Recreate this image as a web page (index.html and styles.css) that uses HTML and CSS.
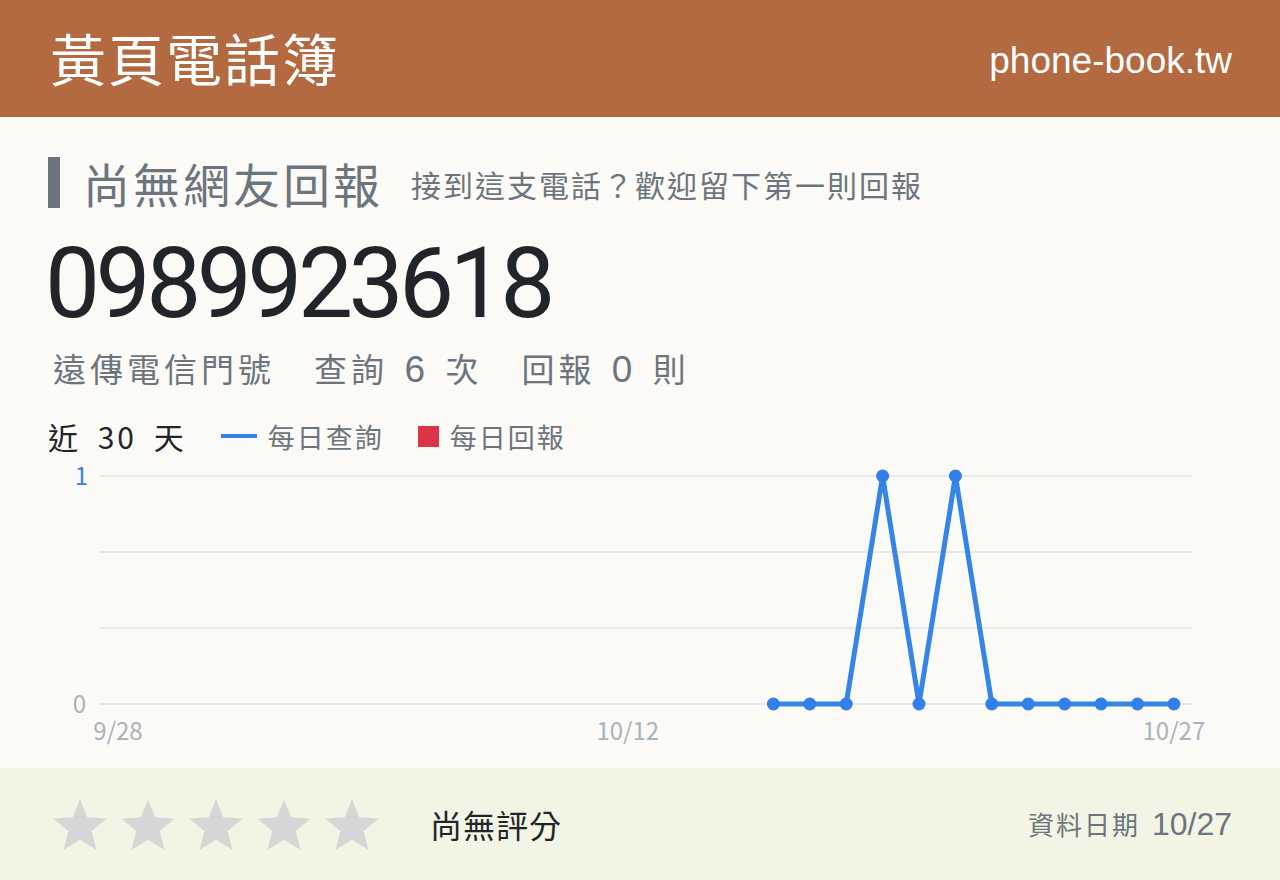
FILE: index.html
```html
<!DOCTYPE html>
<html lang="zh-Hant">
<head>
    <meta charset="UTF-8">
    <meta name="viewport" content="width=device-width, initial-scale=1.0">
    <title>0989923618 - 黃頁電話簿</title>
    <link rel="stylesheet" href="styles.css">
</head>
<body>
    <header class="site-header">
        <div class="brand">黃頁電話簿</div>
        <div class="domain">phone-book.tw</div>
    </header>

    <main class="content">
        <div class="status-row">
            <h2 class="status">尚無網友回報</h2>
            <span class="status-hint">接到這支電話？歡迎留下第一則回報</span>
        </div>

        <h1 class="number">0989923618</h1>

        <div class="summary">
            <span>遠傳電信門號</span>
            <span>查詢 <b>6</b> 次</span>
            <span>回報 <b>0</b> 則</span>
        </div>

        <div class="legend">
            <span class="legend-title">近 30 天</span>
            <span class="legend-item"><i class="key key-line"></i>每日查詢</span>
            <span class="legend-item"><i class="key key-box"></i>每日回報</span>
        </div>

        <svg class="chart" id="chart" width="1280" height="300" viewBox="0 0 1280 300"></svg>
    </main>

    <footer class="site-footer">
        <div class="rating">
            <div class="stars">
                <svg viewBox="0 0 24 24"><path d="M12 1.5l3.1 7.6 8.2.6-6.3 5.3 2 8-7-4.3-7 4.3 2-8L.7 9.7l8.2-.6z"/></svg>
                <svg viewBox="0 0 24 24"><path d="M12 1.5l3.1 7.6 8.2.6-6.3 5.3 2 8-7-4.3-7 4.3 2-8L.7 9.7l8.2-.6z"/></svg>
                <svg viewBox="0 0 24 24"><path d="M12 1.5l3.1 7.6 8.2.6-6.3 5.3 2 8-7-4.3-7 4.3 2-8L.7 9.7l8.2-.6z"/></svg>
                <svg viewBox="0 0 24 24"><path d="M12 1.5l3.1 7.6 8.2.6-6.3 5.3 2 8-7-4.3-7 4.3 2-8L.7 9.7l8.2-.6z"/></svg>
                <svg viewBox="0 0 24 24"><path d="M12 1.5l3.1 7.6 8.2.6-6.3 5.3 2 8-7-4.3-7 4.3 2-8L.7 9.7l8.2-.6z"/></svg>
            </div>
            <span class="rating-text">尚無評分</span>
        </div>
        <div class="updated">資料日期 <b>10/27</b></div>
    </footer>

    <script>
        // daily lookups for the last 30 days (9/28 .. 10/27), null = no data yet
        const lookups = [
            null, null, null, null, null, null, null, null, null, null,
            null, null, null, null, null, null, null, null,
            0, 0, 0, 1, 0, 1, 0, 0, 0, 0, 0, 0
        ];

        const NS = 'http://www.w3.org/2000/svg';
        const chart = document.getElementById('chart');

        const plotLeft = 100, plotRight = 1192;
        const plotTop = 26, plotBottom = 254;
        const firstX = 118, step = 36.41;

        function el(name, attrs, text) {
            const node = document.createElementNS(NS, name);
            for (const k in attrs) node.setAttribute(k, attrs[k]);
            if (text !== undefined) node.textContent = text;
            chart.appendChild(node);
            return node;
        }

        // grid lines
        for (let i = 0; i < 4; i++) {
            const y = plotTop + i * (plotBottom - plotTop) / 3;
            el('line', { x1: plotLeft, x2: plotRight, y1: y, y2: y, class: 'grid' });
        }

        // axis labels
        el('text', { x: 88, y: plotTop + 9, class: 'y-label y-max', 'text-anchor': 'end' }, '1');
        el('text', { x: 86, y: plotBottom + 9, class: 'y-label', 'text-anchor': 'end' }, '0');
        el('text', { x: firstX, y: plotBottom + 36, class: 'x-label', 'text-anchor': 'middle' }, '9/28');
        el('text', { x: firstX + 14 * step, y: plotBottom + 36, class: 'x-label', 'text-anchor': 'middle' }, '10/12');
        el('text', { x: firstX + 29 * step, y: plotBottom + 36, class: 'x-label', 'text-anchor': 'middle' }, '10/27');

        // lookup series
        const pts = [];
        lookups.forEach((v, i) => {
            if (v === null) return;
            pts.push([firstX + i * step, plotBottom - v * (plotBottom - plotTop)]);
        });
        el('polyline', { points: pts.map(p => p.join(',')).join(' '), class: 'series' });
        pts.forEach(p => el('circle', { cx: p[0], cy: p[1], r: 6.5, class: 'dot' }));
    </script>
</body>
</html>
```

FILE: styles.css
```css
body {
    margin: 0;
    width: 1280px;
    height: 880px;
    overflow: hidden;
    background-color: #fbfaf6;
    font-family: "Noto Sans CJK TC", "Noto Sans", sans-serif;
    color: #212529;
    display: flex;
    flex-direction: column;
}

.site-header {
    height: 117px;
    flex: none;
    background-color: #b46a40;
    color: #fff;
    display: flex;
    justify-content: space-between;
    align-items: center;
    padding: 0 48px 0 50px;
}

.brand {
    font-size: 56px;
    letter-spacing: 2px;
    line-height: 1;
    margin-top: -4px;
}

.domain {
    font-family: "Liberation Sans", Arial, sans-serif;
    font-size: 37px;
    margin-top: 4px;
}

.content {
    flex: 1;
    min-height: 0;
    padding: 40px 0 0 48px;
}

.status-row {
    display: flex;
    align-items: center;
    height: 51px;
}

.status {
    margin: 0;
    height: 51px;
    display: flex;
    align-items: center;
    border-left: 12px solid #6c757d;
    padding-left: 23px;
    font-size: 47px;
    font-weight: normal;
    letter-spacing: 3px;
    color: #6c757d;
}

.status-hint {
    margin-left: 28px;
    font-size: 30px;
    letter-spacing: 2px;
    color: #6c757d;
    margin-top: 2px;
}

.number {
    margin: 26px 0 0 -3px;
    font-family: Roboto, "Liberation Sans", sans-serif;
    font-weight: normal;
    font-size: 98px;
    line-height: 100px;
    letter-spacing: -4.5px;
    color: #212529;
}

.summary {
    margin: 10px 0 0 5px;
    display: flex;
    gap: 39px;
    font-size: 33px;
    letter-spacing: 4px;
    line-height: 48px;
    color: #6c757d;
    word-spacing: 5px;
}

.summary b {
    font-family: "Liberation Sans", Arial, sans-serif;
    font-weight: normal;
    font-size: 37px;
}

.legend {
    margin-top: 22px;
    display: flex;
    align-items: center;
    height: 40px;
    font-size: 27px;
    color: #6c757d;
}

.legend-title {
    color: #212529;
    font-size: 30px;
    letter-spacing: 3px;
    word-spacing: 7px;
    margin-right: 34px;
}

.legend-item {
    display: flex;
    align-items: center;
    letter-spacing: 2px;
    margin-right: 34px;
}

.key {
    display: inline-block;
    margin-right: 11px;
}

.key-line {
    width: 36px;
    height: 4px;
    background-color: #3182e8;
}

.key-box {
    width: 21px;
    height: 21px;
    background-color: #dc3545;
}

.chart {
    display: block;
    margin: -6px 0 0 -48px;
}

.chart .grid {
    stroke: #e6e8eb;
    stroke-width: 2;
}

.chart .series {
    fill: none;
    stroke: #3584e8;
    stroke-width: 5;
    stroke-linejoin: round;
}

.chart .dot {
    fill: #2f80ea;
}

.chart text {
    font-family: "Noto Sans CJK TC", "Noto Sans", sans-serif;
    font-size: 24px;
    fill: #aab2bb;
}

.chart .y-max {
    fill: #3182e8;
}

.site-footer {
    height: 112px;
    flex: none;
    background-color: #f2f5e3;
    display: flex;
    justify-content: space-between;
    align-items: center;
    padding: 0 48px 0 52px;
}

.rating {
    display: flex;
    align-items: center;
}

.stars {
    display: flex;
    gap: 12px;
}

.stars svg {
    width: 56px;
    height: 56px;
    fill: #d6d6d6;
}

.rating-text {
    margin-left: 50px;
    font-size: 32px;
    letter-spacing: 1px;
    color: #212529;
}

.updated {
    font-size: 26px;
    letter-spacing: 2px;
    color: #6c757d;
}

.updated b {
    font-family: "Liberation Sans", Arial, sans-serif;
    font-weight: normal;
    font-size: 32px;
    letter-spacing: 0;
    margin-left: 4px;
}
```
